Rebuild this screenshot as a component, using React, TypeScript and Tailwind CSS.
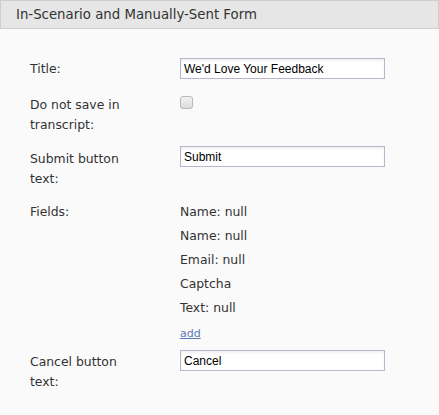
import React from 'react';

const fields = ['Name: null', 'Name: null', 'Email: null', 'Captcha', 'Text: null'];

function TextInput({ value }: { value: string }) {
  return (
    <input
      type="text"
      defaultValue={value}
      className="h-[21px] w-[205px] border border-[#b7b7cb] bg-white px-[3px] text-[12px] text-black shadow-[inset_0_2px_3px_rgba(0,0,0,0.06)] outline-none"
      style={{ fontFamily: '"Liberation Sans", Arial, sans-serif' }}
    />
  );
}

export default function App() {
  return (
    <div
      className="h-[415px] w-[439px] overflow-hidden bg-[#fafafa] text-[#333]"
      style={{ fontFamily: '"DejaVu Sans", Verdana, sans-serif' }}>
      <div className="flex h-[29px] items-center border border-[#cfcfcf] bg-[#e6e6e6] pl-[15px] text-[13.3px] text-[#333]">
        In-Scenario and Manually-Sent Form
      </div>

      <div className="grid grid-cols-[150px_1fr] pl-[30px] pt-[29px] text-[12.4px] leading-[20px]">
        <div className="pt-[1px]">Title:</div>
        <div>
          <TextInput value="We'd Love Your Feedback" />
        </div>

        <div className="mt-[14px] w-[100px] pt-[2px]">Do not save in transcript:</div>
        <div className="mt-[17px]">
          <span className="block h-[13px] w-[13px] rounded-[3px] border border-[#b9b9b9] bg-gradient-to-b from-[#f2f2f2] to-[#dcdcdc]" />
        </div>

        <div className="mt-[11px] w-[100px] pt-[3px]">Submit button text:</div>
        <div className="mt-[11px]">
          <TextInput value="Submit" />
        </div>

        <div className="mt-[9px] pt-[4px]">Fields:</div>
        <div className="mt-[9px] flex flex-col pt-[4px]">
          {fields.map((f, i) => (
            <div key={i} className="h-[24px]">
              {f}
            </div>
          ))}
          <a href="#" className="h-[28px] pt-[2px] text-[11px] text-[#5b79b4] underline">
            add
          </a>
        </div>

        <div className="w-[100px] pt-[2px]">Cancel button text:</div>
        <div>
          <TextInput value="Cancel" />
        </div>
      </div>
    </div>
  );
}
